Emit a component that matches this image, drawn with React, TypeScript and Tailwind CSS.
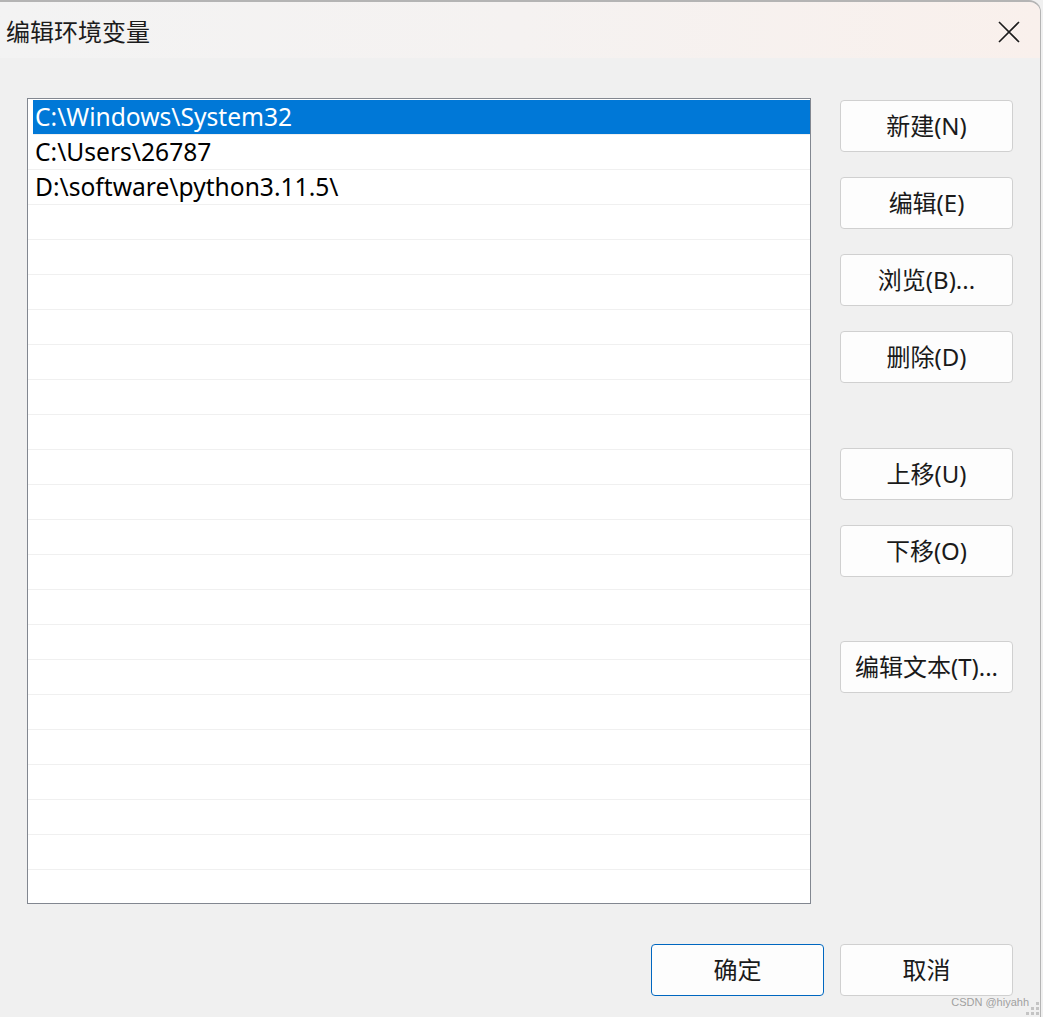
import React from "react";

const rows = ["C:\\Windows\\System32", "C:\\Users\\26787", "D:\\software\\python3.11.5\\"];
const emptyCount = 20;

function Btn({ label, primary = false }: { label: string; primary?: boolean }) {
  return (
    <div
      className={
        "w-[173px] h-[52px] flex items-center justify-center rounded-[4px] bg-[#fdfdfd] text-[24px] text-[#1a1a1a] " +
        (primary ? "border border-[#0067c0]" : "border border-[#d0d0d0]")
      }
    >
      {label}
    </div>
  );
}

export default function App() {
  return (
    <div
      className="w-[1043px] h-[1017px] bg-[#f0f0f0] overflow-hidden relative"
      style={{ fontFamily: '"Noto Sans", "Noto Sans CJK SC", sans-serif' }}
    >
      <div className="w-[1041px] h-[1017px] border-t-2 border-r border-[#b4b4b4] rounded-tr-[12px] overflow-hidden flex flex-col bg-[#f0f0f0]">
        {/* title bar */}
        <div className="h-[56px] flex items-center justify-between pl-[6px] pr-[20px] bg-gradient-to-r from-[#f3f3f3] via-[#f5f2f1] to-[#f9f0ec]">
          <div className="text-[24px] text-[#1c1c1c] leading-none pt-[4px]">编辑环境变量</div>
          <svg width="22" height="22" viewBox="0 0 22 22" className="mt-[4px]">
            <path d="M1 1 L21 21 M21 1 L1 21" stroke="#1c1c1c" strokeWidth="1.6" />
          </svg>
        </div>
        {/* body */}
        <div className="flex pl-[27px] pt-[40px]">
          <div className="w-[784px] h-[806px] border border-[#828790] bg-white overflow-hidden">
            {rows.map((r, i) => (
              <div
                key={i}
                className={
                  "h-[35px] flex items-center text-[24.6px] border-b border-[#f0f0f0] " +
                  (i === 0 ? "bg-[#0078d7] text-white ml-[5px] mr-0 pl-[2px] mt-[1px]" : "text-[#000] pl-[7px]")
                }
              >
                {r}
              </div>
            ))}
            {Array.from({ length: emptyCount }).map((_, i) => (
              <div key={"e" + i} className="h-[35px] border-b border-[#f0f0f0]" />
            ))}
          </div>
          <div className="ml-[29px] flex flex-col pt-[2px]">
            <Btn label="新建(N)" />
            <div className="h-[25px]" />
            <Btn label="编辑(E)" />
            <div className="h-[25px]" />
            <Btn label="浏览(B)..." />
            <div className="h-[25px]" />
            <Btn label="删除(D)" />
            <div className="h-[65px]" />
            <Btn label="上移(U)" />
            <div className="h-[25px]" />
            <Btn label="下移(O)" />
            <div className="h-[64px]" />
            <Btn label="编辑文本(T)..." />
          </div>
        </div>
        {/* footer */}
        <div className="flex justify-end gap-[16px] pr-[27px] mt-[40px]">
          <Btn label="确定" primary />
          <Btn label="取消" />
        </div>
      </div>
      <div className="absolute right-[14px] bottom-[7px] text-[11px] text-[#a0a0a0]" style={{ fontFamily: '"Liberation Sans", sans-serif' }}>
        CSDN @hiyahh
      </div>
      <div className="absolute right-[4px] bottom-[2px] grid grid-cols-3 gap-[2px]">
        {[0, 0, 1, 0, 1, 1, 1, 1, 1].map((v, i) => (
          <div key={i} className={"w-[3px] h-[3px] " + (v ? "bg-[#c4c4c4]" : "")} />
        ))}
      </div>
    </div>
  );
}
